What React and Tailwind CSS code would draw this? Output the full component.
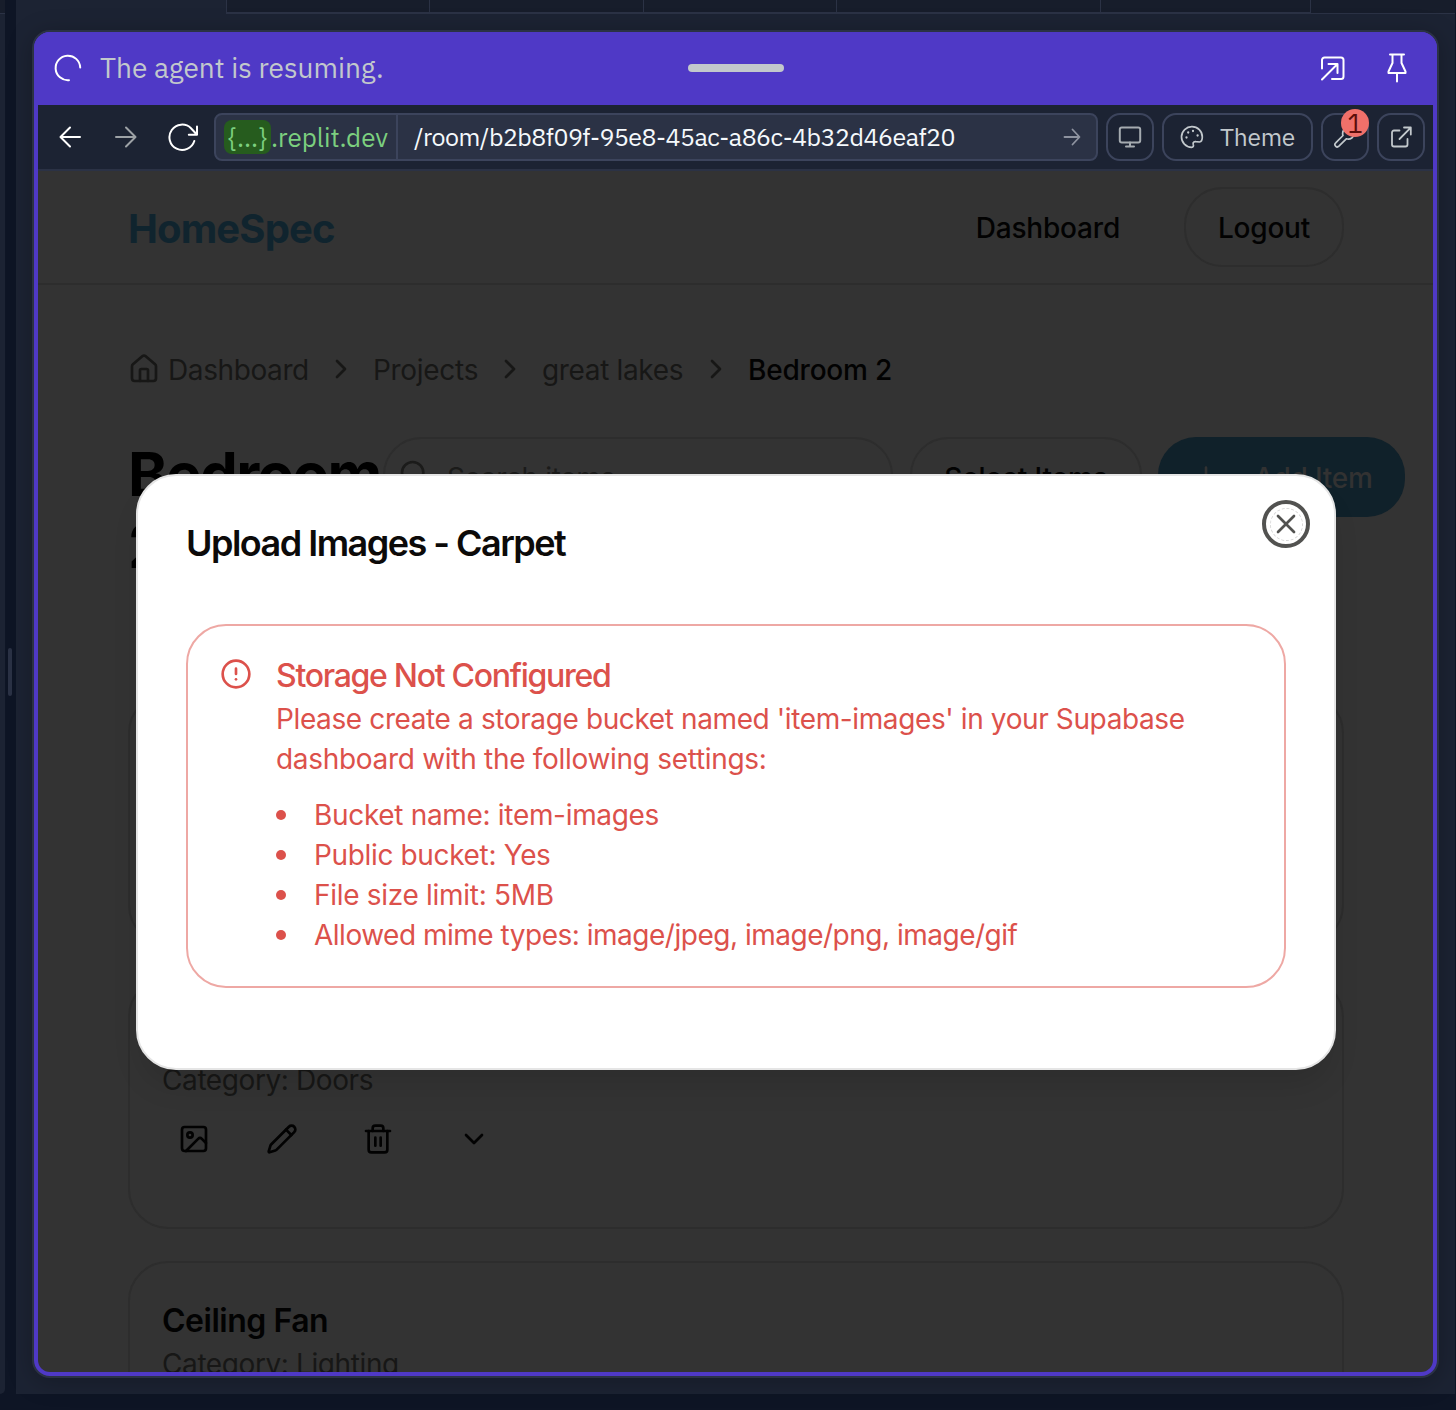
import React from "react";
import {
  House,
  ChevronRight,
  ChevronDown,
  Search,
  Plus,
  Image as ImageIcon,
  Pencil,
  Trash2,
  X,
  CircleAlert,
} from "lucide-react";

const topTabs = ["w-[203px]", "w-[214px]", "w-[193px]", "w-[264px]", "w-[210px]"];

const Svg = ({ w, h, className, children, sw = 2 }) => (
  <svg
    width={w}
    height={h}
    viewBox={`0 0 ${w} ${h}`}
    className={className}
    fill="none"
    stroke="currentColor"
    strokeWidth={sw}
    strokeLinecap="round"
    strokeLinejoin="round"
  >
    {children}
  </svg>
);

function TabStrip() {
  return (
    <div className="flex h-[14px] shrink-0">
      <div className="w-[210px]" />
      <div className="flex border-l border-[#2b3245]">
        {topTabs.map((w, i) => (
          <div key={i} className={`${w} h-[14px] border-r border-b-2 border-b-[#2b3245] border-r-[#2b3245] bg-[#171d2b]`} />
        ))}
      </div>
      <div className="flex-1 border-b border-[#2b3245] bg-[#171d2b]" />
    </div>
  );
}

function AgentBar() {
  return (
    <div className="relative flex h-[73px] shrink-0 items-center justify-between bg-[#4f39c6] pr-[24px] pb-px pl-[18px]">
      <div className="flex items-center">
        <Svg w={32} h={32} className="text-white">
          <path d="M28.2 15.5A12.3 12.3 0 1 0 17 28.2" />
        </Svg>
        <span className="ml-[16px] text-[28px] leading-[40px] whitespace-nowrap text-[#c2c8cc]">
          The agent is resuming.
        </span>
      </div>
      <div className="absolute top-[32px] left-[654px] h-[8px] w-[96px] rounded-full bg-[#c2c8cc]" />
      <div className="flex items-center gap-[32px] text-white">
        <Svg w={32} h={32}>
          <path d="M5 16.5V8a2.5 2.5 0 0 1 2.500-2.500H24a2.500 2.500 0 0 1 2.500 2.500v16.500A2.500 2.500 0 0 1 24 27H15" />
          <path d="M11.500 12H20.500V21M20 12.500L5 27.500" />
        </Svg>
        <Svg w={32} h={32}>
          <path d="M9 2.500H23M11.500 2.500V11L7.500 19.500V21H24.500V19.500L20.500 11V2.500M16 21V29.500" />
        </Svg>
      </div>
    </div>
  );
}

function ToolButton({ children, className = "w-[48px]" }) {
  return (
    <div className={`${className} relative flex h-[48px] items-center justify-center rounded-[14px] border-2 border-[#3c445c] text-[#c2c8cc]`}>
      {children}
    </div>
  );
}

function Toolbar() {
  return (
    <div className="flex h-[66px] shrink-0 items-center border-b-2 border-[#2b3245] bg-[#1c2333] pr-[8px] pl-[16px]">
      <Svg w={32} h={32} className="text-white">
        <path d="M26 16H7M16 6.500L6.500 16L16 25.500" />
      </Svg>
      <Svg w={32} h={32} className="ml-[24px] text-[#9da2a6]">
        <path d="M6 16H25M16 6.500L25.500 16L16 25.500" />
      </Svg>
      <Svg w={32} h={32} className="ml-[24px] text-white">
        <path d="M28.300 20A12.700 12.700 0 1 1 25 7.200L30.800 13.500M31 5.500V13.700H22.800" />
      </Svg>
      <div className="ml-[16px] flex h-[48px] w-[884px] items-center rounded-[8px] border-2 border-[#3c445c] bg-[#2b3245]">
        <div className="flex h-full w-[182px] items-center border-r-2 border-[#3c445c] pl-[8px] text-[26px] whitespace-nowrap text-[#7ccf7f]">
          <span className="flex h-[34px] w-[47px] items-center justify-center rounded-[8px] bg-[#265c1e]">{"{...}"}</span>
          <span>.replit.dev</span>
        </div>
        <span className="ml-[16px] flex-1 text-[25px] tracking-[-0.52px] whitespace-nowrap text-[#f5f9fc]">
          /room/b2b8f09f-95e8-45ac-a86c-4b32d46eaf20
        </span>
        <Svg w={24} h={24} sw={1.8} className="mr-[12px] text-[#8e93a0]">
          <path d="M4.500 12H19M12.500 4.500L19.500 12L12.500 19.500" />
        </Svg>
      </div>
      <div className="ml-[8px] flex gap-[8px]">
        <ToolButton>
          <Svg w={24} h={24} className="text-[#a5abb0]">
            <rect x="1.800" y="2.500" width="20.400" height="15" rx="2" />
            <path d="M12 17.500V21M8 21.500H16" />
          </Svg>
        </ToolButton>
        <ToolButton className="w-[151px]">
          <Svg w={24} h={24} sw={1.7} className="text-[#c2c8cc]">
            <path d="M12 1.700A10.300 10.300 0 1 0 11.600 22.300C13.600 22.300 13.700 20.700 13.200 19.300C12.600 17.400 14.200 16.300 16 16.600L19.500 17C21.500 16.800 22.300 14.500 22.300 12A10.300 10.300 0 0 0 12 1.700Z" />
            <path strokeWidth="2.300" d="M6.500 12.500h.01M8.200 7.500h.01M13 6h.01M17.600 10.500h.01" />
          </Svg>
          <span className="ml-[16px] text-[24.5px] tracking-[-0.2px] whitespace-nowrap">Theme</span>
        </ToolButton>
        <ToolButton>
          <Svg w={24} h={24} sw={1.7}>
            <path d="M15.500 2.500A6 6 0 0 0 10 10.500L2.700 17.800A2.200 2.200 0 0 0 5.900 21.200L13.300 13.800A6 6 0 0 0 21.300 8" />
          </Svg>
          <span className="absolute -top-[6px] left-[18px] flex h-[28px] w-[28px] items-center justify-center rounded-full bg-[#f0706a] text-[26px] leading-none text-[#5c0d0a]">
            1
          </span>
        </ToolButton>
        <ToolButton>
          <Svg w={24} h={24} sw={1.800}>
            <path d="M10.500 5.500H5A2 2 0 0 0 3 7.500V19.500A2 2 0 0 0 5 21.500H16.500A2 2 0 0 0 18.500 19.500V14M15 2.500H21.800V9.500M21.500 2.800L10.500 14" />
          </Svg>
        </ToolButton>
      </div>
    </div>
  );
}

function Breadcrumbs() {
  return (
    <div className="mt-[64px] flex h-[40px] items-center gap-[16px] text-[28px] leading-[40px] whitespace-nowrap text-[#171716]">
      <span className="flex items-center gap-[8px]">
        <House size={32} strokeWidth={2} />
        <span className="w-[141px] pt-px tracking-[-0.4px]">Dashboard</span>
      </span>
      <ChevronRight size={32} className="shrink-0" />
      <span className="w-[105px] pt-px tracking-[-0.3px]">Projects</span>
      <ChevronRight size={32} className="shrink-0" />
      <span className="w-[142px] pt-px tracking-[-0.35px]">great lakes</span>
      <ChevronRight size={32} className="shrink-0" />
      <span className="pt-px font-medium tracking-[-0.2px] text-[#020202]">Bedroom 2</span>
    </div>
  );
}

function ItemCard({ title, category }) {
  return (
    <div className="h-[252px] shrink-0 rounded-[40px] border-2 border-[#2d2d2d] p-[32px]">
      <div className="h-[48px] pt-[2px] text-[32px] leading-[48px] font-semibold tracking-[-0.48px] text-[#020202]">{title}</div>
      <div className="h-[40px] pt-px text-[28px] leading-[40px] tracking-[-0.4px] text-[#171716]">{category}</div>
      <div className="flex h-[80px] items-center gap-[16px] text-[#020202]">
        <div className="flex w-[64px] justify-center"><ImageIcon size={32} /></div>
        <div className="flex w-[80px] justify-center"><Pencil size={32} /></div>
        <div className="flex w-[80px] justify-center"><Trash2 size={32} /></div>
        <div className="flex w-[80px] justify-center"><ChevronDown size={32} /></div>
      </div>
    </div>
  );
}

function RoomPage() {
  return (
    <div className="flex flex-col">
      <div className="h-[114px] border-b-2 border-[#2d2d2d]">
        <div className="ml-[90px] flex h-[112px] w-[1216px] items-center justify-between">
          <span className="pt-[4px] text-[40px] font-bold tracking-[-0.85px] text-[#10242e]">HomeSpec</span>
          <div className="flex items-center text-[28px] font-medium tracking-[-0.2px] text-[#020202]">
            <span className="mr-[64px] pt-px">Dashboard</span>
            <span className="flex h-[80px] w-[160px] items-center justify-center rounded-[38px] border-2 border-[#2d2d2d] pt-px">Logout</span>
          </div>
        </div>
      </div>
      <div className="ml-[90px] w-[1216px]">
        <Breadcrumbs />
        <div className="mt-[48px] flex h-[144px] w-[1277px] items-start text-[28px] whitespace-nowrap">
          <h1 className="w-[255px] pt-px text-[60px] leading-[72px] font-bold tracking-[-1.7px] text-black">
            Bedroom
            <br />2
          </h1>
          <div className="flex h-[80px] w-[510px] items-center rounded-[38px] border-2 border-[#2d2d2d] pl-[13px] tracking-[-0.35px] text-[#1b1b1a]">
            <Search size={32} className="-mt-[6px] mr-[17px]" />
            <span className="pt-px">Search items...</span>
          </div>
          <div className="ml-[17px] flex h-[80px] w-[232px] items-center justify-center rounded-[38px] border-2 border-[#2d2d2d] pt-px font-medium tracking-[-0.12px] text-[#020202]">
            Select Items
          </div>
          <div className="ml-[16px] flex h-[80px] w-[247px] items-center rounded-[38px] bg-[#10212a] pl-[32px] font-medium tracking-[-0.2px] text-[#323232]">
            <Plus size={32} className="mr-[32px]" />
            <span className="pt-px">Add Item</span>
          </div>
        </div>
        <div className="mt-[112px] flex flex-col gap-[32px]">
          <ItemCard />
          <ItemCard category="Category: Doors" />
          <ItemCard title="Ceiling Fan" category="Category: Lighting" />
        </div>
      </div>
    </div>
  );
}

function UploadDialog() {
  return (
    <div className="absolute top-[303px] left-[98px] h-[596px] w-[1200px] rounded-[40px] border-2 border-[#e5e5e5] bg-white p-[48px] shadow-[0_20px_30px_-6px_rgba(0,0,0,0.12)]">
      <h2 className="h-[36px] pt-px text-[36px] leading-[36px] font-semibold tracking-[-1.52px] whitespace-nowrap text-[#0c0a09]">
        Upload Images - Carpet
      </h2>
      <div className="absolute top-[24px] right-[24px] flex h-[48px] w-[48px] items-center justify-center rounded-full border-4 border-[#525250] text-[#525250]">
        <div className="flex h-[33px] w-[33px] shrink-0 items-center justify-center rounded-full border border-dashed border-[#d6d6d6]">
          <X size={32} className="shrink-0" />
        </div>
      </div>
      <div className="mt-[64px] flex h-[364px] w-[1100px] rounded-[40px] border-2 border-[#eea8a4] p-[32px] text-[#dc514b]">
        <CircleAlert size={32} className="shrink-0" />
        <div className="ml-[24px] pt-px whitespace-nowrap">
          <div className="mb-[7px] text-[32px] leading-[33px] font-medium tracking-[-1.29px]">Storage Not Configured</div>
          <div className="text-[28px] leading-[40px]">
            <div className="tracking-[-0.385px]">
              Please create a storage bucket named 'item-images' in your Supabase
            </div>
            <div className="tracking-[-0.3px]">dashboard with the following settings:</div>
            <div className="mt-[16px]">
              <Bullet className="tracking-[-0.32px]">Bucket name: item-images</Bullet>
              <Bullet className="tracking-[-0.35px]">Public bucket: Yes</Bullet>
              <Bullet className="tracking-[-0.3px]">File size limit: 5MB</Bullet>
              <Bullet className="tracking-[-0.49px]">Allowed mime types: image/jpeg, image/png, image/gif</Bullet>
            </div>
          </div>
        </div>
      </div>
    </div>
  );
}

function Bullet({ className, children }) {
  return (
    <div className="flex h-[40px] items-center">
      <span className="mr-[28px] h-[10px] w-[10px] rounded-full bg-[#dc514b]" />
      <span className={className}>{children}</span>
    </div>
  );
}

export default function App() {
  return (
    <div className="flex h-[1410px] w-[1456px] overflow-hidden bg-[#0e1525] font-['IBM_Plex_Sans',Roboto,sans-serif]">
      <div className="flex h-[1394px] w-[5px] flex-col rounded-br-[5px] bg-[#1c2333]">
        <div className="h-[14px] border-b border-[#2b3245] bg-[#171d2b]" />
      </div>
      <div className="flex w-[11px] items-center pl-[3px]">
        <div className="mb-[66px] h-[48px] w-[4px] rounded-full bg-[#2b3245]" />
      </div>
      <div className="flex h-[1394px] w-[1439px] flex-col bg-[#1c2333]">
        <TabStrip />
        <div className="mt-[16px] ml-[16px] h-[1348px] w-[1407px] rounded-[18px] border-2 border-[#2b3245] bg-[#4f39c6] shadow-[0_4px_24px_rgba(2,2,3,0.25)]">
          <div className="flex h-[1344px] flex-col overflow-hidden rounded-[16px]">
            <AgentBar />
            <div className="mx-[4px] mb-[4px] flex flex-1 flex-col overflow-hidden rounded-b-[12px] bg-[#333333]">
              <Toolbar />
              <div className="relative h-[1201px] overflow-hidden font-['Inter',sans-serif]">
                <RoomPage />
                <UploadDialog />
              </div>
            </div>
          </div>
        </div>
      </div>
    </div>
  );
}
